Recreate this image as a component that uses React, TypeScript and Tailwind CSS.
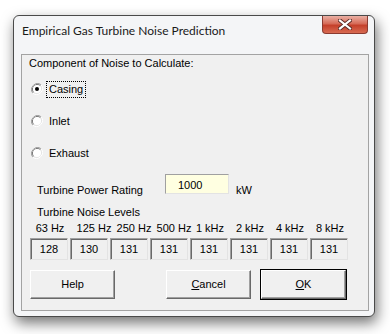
import React from 'react';

const freqs = ['63 Hz', '125 Hz', '250 Hz', '500 Hz', '1 kHz', '2 kHz', '4 kHz', '8 kHz'];
const levels = ['128', '130', '131', '131', '131', '131', '131', '131'];

function Radio({ checked }: { checked?: boolean }) {
  return (
    <svg width="12" height="12" viewBox="0 0 12 12" className="shrink-0">
      <path d="M10.2 1.8 A6 6 0 0 0 1.8 10.2" fill="none" stroke="#a0a0a0" strokeWidth="1" />
      <path d="M1.8 10.2 A6 6 0 0 0 10.2 1.8" fill="none" stroke="#ffffff" strokeWidth="1" />
      <path d="M9.5 2.5 A5 5 0 0 0 2.5 9.5" fill="none" stroke="#696969" strokeWidth="1" />
      <path d="M2.5 9.5 A5 5 0 0 0 9.5 2.5" fill="none" stroke="#e3e3e3" strokeWidth="1" />
      <circle cx="6" cy="6" r="4" fill="#ffffff" />
      {checked && <circle cx="6" cy="6" r="2" fill="#000000" />}
    </svg>
  );
}

function Btn({ children, primary }: { children: React.ReactNode; primary?: boolean }) {
  return (
    <div
      className={
        'w-[87px] h-[31px] flex ' +
        (primary ? 'border border-black' : 'border border-transparent')
      }
    >
      <div className="flex-1 flex items-center justify-center bg-[#f0f0f0] border-t border-l border-t-white border-l-white border-b border-r border-b-[#696969] border-r-[#696969] shadow-[inset_-1px_-1px_0_#a0a0a0]">
        {children}
      </div>
    </div>
  );
}

export default function App() {
  return (
    <div
      className="w-[390px] h-[334px] bg-white pl-[13px] pt-[15px] text-[11px] text-black"
      style={{ fontFamily: '"Liberation Sans", Arial, sans-serif' }}
    >
      <div className="w-[362px] h-[302px] rounded-[6px] border border-[#4a4a4a] bg-[#f4f5f7] shadow-[2px_6px_14px_rgba(0,0,0,0.55)] flex flex-col">
        <div className="h-[38px] flex items-start">
          <div
            className="pl-[8px] pt-[6px] text-[12px] text-[#1a1a1a]"
            style={{ fontFamily: 'Lato, "Liberation Sans", sans-serif' }}
          >
            Empirical Gas Turbine Noise Prediction
          </div>
          <div className="ml-auto mr-[6px] w-[46px] h-[18px] rounded-b-[4px] border border-t-0 border-[#8a3a30] bg-[linear-gradient(#eab0a4,#d66b58_45%,#c5402b_55%,#d86a52)] flex items-center justify-center">
            <svg width="14" height="11" viewBox="0 0 14 11">
              <path d="M2 1.5 L12 9.5 M12 1.5 L2 9.5" stroke="#5a2a24" strokeWidth="4" strokeLinecap="square" />
              <path d="M2 1.5 L12 9.5 M12 1.5 L2 9.5" stroke="#ffffff" strokeWidth="2.2" strokeLinecap="square" />
            </svg>
          </div>
        </div>
        <div className="ml-[7px] w-[348px] h-[257px] border border-[#a3a3a3] bg-[#f0f0f0] flex flex-col">
          <div className="pl-[7px] h-[16px] leading-[16px]">Component of Noise to Calculate:</div>

          <div className="mt-[9px] h-[18px] pl-[9px] flex items-center">
            <Radio checked />
            <span className="ml-[3px] px-[2px] h-[17px] leading-[15px] border border-dotted border-black">Casing</span>
          </div>
          <div className="mt-[14px] h-[18px] pl-[9px] flex items-center">
            <Radio />
            <span className="ml-[6px]">Inlet</span>
          </div>
          <div className="mt-[14px] h-[18px] pl-[9px] flex items-center">
            <Radio />
            <span className="ml-[6px]">Exhaust</span>
          </div>

          <div className="mt-[12px] h-[22px] flex items-start">
            <span className="ml-[15px] mt-[8px] w-[128px]">Turbine Power Rating</span>
            <div className="w-[64px] h-[20px] bg-[#ffffe1] border border-[#a0a0a0] border-b-[#e3e3e3] border-r-[#e3e3e3] pl-[12px] pt-[2px]">
              1000
            </div>
            <span className="ml-[7px] mt-[8px]">kW</span>
          </div>

          <div className="mt-[9px] pl-[15px] h-[14px] leading-[14px]">Turbine Noise Levels</div>
          <div className="mt-[2px] pl-[8px] h-[14px] leading-[14px] flex">
            {freqs.map((f, i) => (
              <div key={f} className="w-[40px] flex justify-center whitespace-nowrap">
                <span className={i >= 1 && i <= 3 ? 'translate-x-[4px]' : ''}>{f}</span>
              </div>
            ))}
          </div>
          <div className="mt-[3px] pl-[8px] flex gap-[2px]">
            {levels.map((v, i) => (
              <div
                key={i}
                className="w-[38px] h-[22px] flex items-center justify-center bg-[#f0f0f0] border border-[#a0a0a0] border-b-[#e3e3e3] border-r-[#e3e3e3] shadow-[inset_1px_1px_0_#696969]"
              >
                {v}
              </div>
            ))}
          </div>

          <div className="mt-[9px] flex pl-[7px]">
            <Btn>Help</Btn>
            <div className="ml-[49px]">
              <Btn>
                <span>
                  <span className="underline">C</span>ancel
                </span>
              </Btn>
            </div>
            <div className="ml-[8px]">
              <Btn primary>
                <span>
                  <span className="underline">O</span>K
                </span>
              </Btn>
            </div>
          </div>
        </div>
      </div>
    </div>
  );
}
